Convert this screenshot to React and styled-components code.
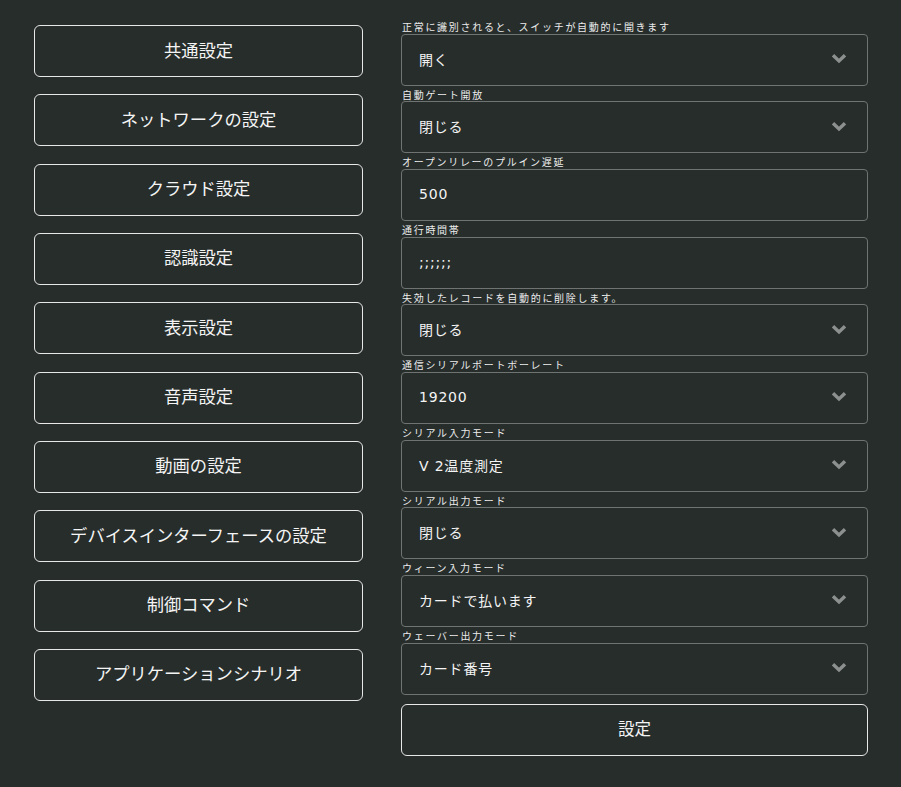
import React from 'react'
import styled, { createGlobalStyle } from 'styled-components'

const GlobalStyle = createGlobalStyle`
  html, body {
    margin: 0;
    padding: 0;
    background: #262d2b;
  }
  body {
    font-family: 'DejaVu Sans', 'Noto Sans CJK JP', sans-serif;
    color: #f2f2f2;
  }
`

const Page = styled.div`
  display: flex;
  align-items: flex-start;
  gap: 38px;
  padding: 25px 0 0 34px;
  min-height: 762px;
  box-sizing: border-box;
`

const Menu = styled.div`
  display: flex;
  flex-direction: column;
  gap: 17.33px;
  width: 329px;
`

const MenuButton = styled.button`
  height: 52px;
  box-sizing: border-box;
  background: transparent;
  border: 1px solid #e8e8e8;
  border-radius: 6px;
  color: #f4f4f4;
  font-family: 'Noto Sans CJK JP', sans-serif;
  font-size: 17.3px;
  padding: 0 0 4px;
  cursor: pointer;
`

const Form = styled.div`
  display: flex;
  flex-direction: column;
  width: 467px;
  margin-top: -7px;
`

const Field = styled.div`
  display: flex;
  flex-direction: column;
`

const Label = styled.div`
  height: 15.67px;
  line-height: 17px;
  font-family: 'Noto Sans CJK JP', sans-serif;
  font-size: 10px;
  letter-spacing: 1.7px;
  color: #ececec;
  padding-left: 1px;
  white-space: nowrap;
`

const Box = styled.div`
  height: 52px;
  box-sizing: border-box;
  border: 1px solid #6f7472;
  border-radius: 4px;
  display: flex;
  align-items: center;
  justify-content: space-between;
  padding: 0 20px 2px 17px;
  font-size: 14px;
  letter-spacing: 0.8px;
  color: #f4f4f4;
`

const Chevron = () => (
  <svg width="16" height="11" viewBox="0 0 16 11">
    <path d="M2 2.2 L8 8 L14 2.2" fill="none" stroke="#8c908e" strokeWidth="3.4" />
  </svg>
)

const Submit = styled(MenuButton)`
  margin-top: 9px;
  font-size: 16.5px;
`

const menuItems = [
  '共通設定',
  'ネットワークの設定',
  'クラウド設定',
  '認識設定',
  '表示設定',
  '音声設定',
  '動画の設定',
  'デバイスインターフェースの設定',
  '制御コマンド',
  'アプリケーションシナリオ',
]

const fields = [
  { label: '正常に識別されると、スイッチが自動的に開きます', value: '開く', select: true },
  { label: '自動ゲート開放', value: '閉じる', select: true },
  { label: 'オープンリレーのプルイン遅延', value: '500' },
  { label: '通行時間帯', value: ';;;;;;' },
  { label: '失効したレコードを自動的に削除します。', value: '閉じる', select: true },
  { label: '通信シリアルポートボーレート', value: '19200', select: true },
  { label: 'シリアル入力モード', value: 'V 2温度測定', select: true },
  { label: 'シリアル出力モード', value: '閉じる', select: true },
  { label: 'ウィーン入力モード', value: 'カードで払います', select: true },
  { label: 'ウェーバー出力モード', value: 'カード番号', select: true },
]

const App = () => (
  <>
    <GlobalStyle />
    <Page>
      <Menu>
        {menuItems.map(item => (
          <MenuButton key={item}>{item}</MenuButton>
        ))}
      </Menu>
      <Form>
        {fields.map(f => (
          <Field key={f.label}>
            <Label>{f.label}</Label>
            <Box>
              <span>{f.value}</span>
              {f.select && <Chevron />}
            </Box>
          </Field>
        ))}
        <Submit>設定</Submit>
      </Form>
    </Page>
  </>
)

export default App
